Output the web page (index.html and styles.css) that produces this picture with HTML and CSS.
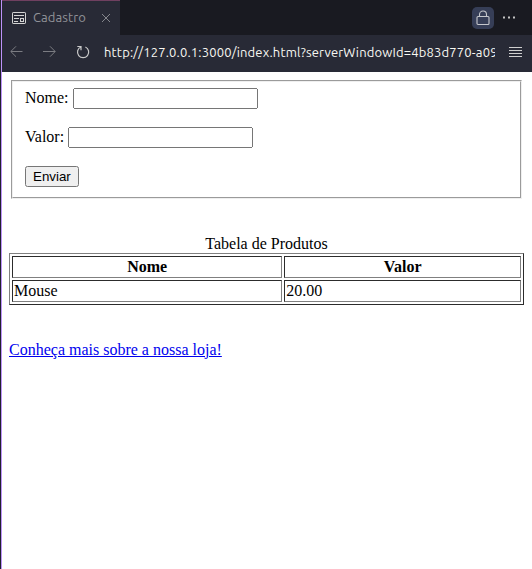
FILE: index.html
```html
<!DOCTYPE html>
<html lang="pt-br">
<head>
<meta charset="utf-8">
<title>Cadastro</title>
<link rel="stylesheet" href="styles.css">
</head>
<body>
<div class="window">
  <header class="tabs">
    <div class="tab">
      <svg class="tab-icon" width="14" height="12" viewBox="0 0 14 12" fill="none" stroke="#d4d4d4"><rect x=".5" y=".5" width="13" height="11" rx=".6"/><path d="M2 3.5h10M2 6.5h5M2 9.5h4"/><rect x="8.5" y="6.5" width="3" height="3"/></svg>
      <span class="tab-title">Cadastro</span>
      <svg width="10" height="10" viewBox="0 0 10 10" fill="none" stroke="#85868c"><path d="M1 1l8 8M9 1l-8 8"/></svg>
    </div>
    <div class="lock"><svg width="14" height="16" viewBox="0 0 14 16" fill="none" stroke="#c5c7cc" stroke-width="1.1"><rect x="1" y="6.5" width="12" height="8" rx="1"/><path d="M3.5 6.5V4.5a3.5 3.5 0 0 1 7 0v2"/></svg></div>
    <svg class="dots" width="14" height="3" viewBox="0 0 14 3" fill="#c3c3c3"><path d="M1 .5h2v2H1zM6 .5h2v2H6zM11 .5h2v2h-2z"/></svg>
  </header>
  <nav class="toolbar">
    <svg class="back" width="13" height="12" viewBox="0 0 13 12" fill="none" stroke="#7b7c82"><path d="M12.5 5.5H1M6 .3L.8 5.5 6 10.7"/></svg>
    <svg class="forward" width="13" height="12" viewBox="0 0 13 12" fill="none" stroke="#7b7c82"><path d="M0 5.5H12M7 .3L12.2 5.5 7 10.7"/></svg>
    <svg class="reload" width="14" height="14" viewBox="0 0 14 14" fill="none" stroke="#c9c9c9" stroke-width="1.2"><path d="M1.3 1.5H5v3.7M4.8 2A5.6 5.6 0 1 0 9.4 2"/></svg>
    <div class="url">http://127.0.0.1:3000/index.html?serverWindowId=4b83d770-a09b</div>
    <svg class="menu" width="13" height="10" viewBox="0 0 13 10" stroke="#cfcfcf"><path d="M0 .5h13M0 3.5h13M0 6.5h13M0 9.5h13"/></svg>
  </nav>
  <main class="page">
    <form>
      <fieldset>
        <label for="nome">Nome:</label>
        <input type="text" id="nome"><br><br>
        <label for="valor">Valor:</label>
        <input type="text" id="valor"><br><br>
        <button type="button">Enviar</button>
      </fieldset>
    </form>
    <br><br>
    <table border="1" class="products">
      <caption>Tabela de Produtos</caption>
      <thead><tr><th class="name">Nome</th><th>Valor</th></tr></thead>
      <tbody><tr><td>Mouse</td><td>20.00</td></tr></tbody>
    </table>
    <br><br>
    <a href="#">Conheça mais sobre a nossa loja!</a>
  </main>
</div>
</body>
</html>
```
FILE: styles.css
```css
* { box-sizing: border-box; }
body { margin: 0; background: #21222c; overflow: hidden; }
svg { display: block; flex: none; }
.window {
  height: 569px;
  margin-left: 1px;
  border-left: 1px solid #bd93f9;
  display: flex;
  flex-direction: column;
}
.tabs {
  height: 35px;
  flex: none;
  display: flex;
  align-items: center;
  background: #191a21;
  font-family: Ubuntu, "Noto Sans", sans-serif;
}
.tab {
  width: 118px;
  height: 35px;
  display: flex;
  align-items: center;
  padding: 0 9px 0 10px;
  background: #282a36;
  border-top: 1px solid #6f4060;
  color: #919298;
  font-size: 13px;
}
.tab-title { margin: -2px auto 0 7px; letter-spacing: 0.1px; }
.lock {
  width: 22px;
  height: 22px;
  margin: 1px 8px 0 auto;
  display: grid;
  place-items: center;
  border-radius: 5px;
  background: #363e57;
}
.dots { margin-right: 16px; }
.toolbar {
  height: 37px;
  flex: none;
  display: flex;
  align-items: center;
  padding: 0 10px 3px 8px;
  background: #282a36;
}
.forward { margin-left: 20px; }
.reload { margin: 0 14px 0 20px; }
.url {
  flex: 1;
  overflow: hidden;
  white-space: nowrap;
  color: #f8f8f2;
  font: 13px/20px Ubuntu, "Noto Sans", sans-serif;
  letter-spacing: 0.17px;
}
.menu { margin-left: 14px; }
.page {
  flex: 1;
  padding: 8px 8px 0 7px;
  background: #fff;
  color: #000;
  font: 16px "Liberation Serif", serif;
}
.products { width: 100%; }
.page a { color: #0000ee; }
```
